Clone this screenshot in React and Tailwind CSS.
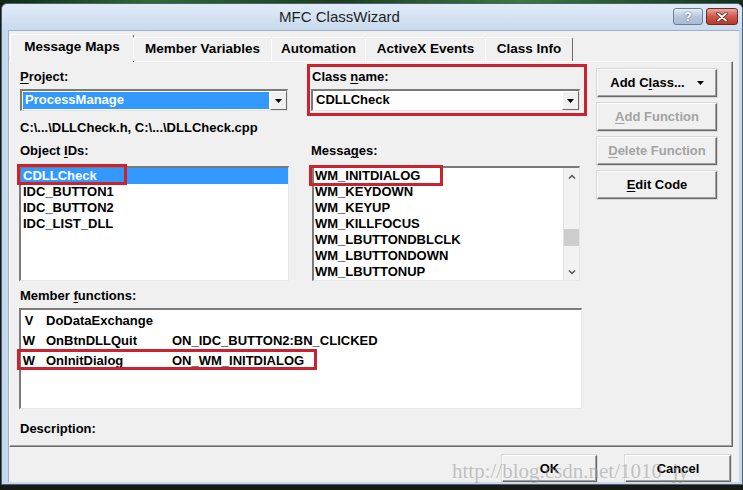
import React from "react";

const tabs = [
  { label: "Message Maps", w: "w-[124px]" },
  { label: "Member Variables", w: "w-[139px]" },
  { label: "Automation", w: "w-[95px]" },
  { label: "ActiveX Events", w: "w-[121px]" },
  { label: "Class Info", w: "w-[88px]" },
];

const objectIds = ["CDLLCheck", "IDC_BUTTON1", "IDC_BUTTON2", "IDC_LIST_DLL"];

const messages = [
  "WM_INITDIALOG",
  "WM_KEYDOWN",
  "WM_KEYUP",
  "WM_KILLFOCUS",
  "WM_LBUTTONDBLCLK",
  "WM_LBUTTONDOWN",
  "WM_LBUTTONUP",
];

const members = [
  { kind: "V", name: "DoDataExchange", handler: "" },
  { kind: "W", name: "OnBtnDLLQuit", handler: "ON_IDC_BUTTON2:BN_CLICKED" },
  { kind: "W", name: "OnInitDialog", handler: "ON_WM_INITDIALOG" },
];

const sunken =
  "border-t-2 border-l-2 border-r border-b border-t-[#7a7a7a] border-l-[#7a7a7a] border-r-[#e6e6e6] border-b-[#e6e6e6]";

const DropArrow = () => (
  <div className="w-[17px] h-full flex items-center justify-center bg-[#f0f0f0] border-t border-l border-white border-r border-b border-r-[#696969] border-b-[#696969]">
    <svg width="7" height="4" viewBox="0 0 7 4">
      <path d="M0 0h7L3.5 4z" fill="#000" />
    </svg>
  </div>
);

const Button = ({ children, disabled, className = "" }) => (
  <div
    className={
      "flex items-center justify-center bg-[#f0f0f0] border-t border-l border-white border-r border-b border-r-[#696969] border-b-[#696969] shadow-[inset_-1px_-1px_0_#a0a0a0,0_0_0_1px_#d8d8d8] text-[13px] font-bold " +
      (disabled ? "text-[#a3a3a3] " : "text-black ") +
      className
    }
  >
    {children}
  </div>
);

const Label = ({ children, className = "" }) => (
  <div className={"h-[16px] leading-[16px] text-[13px] font-bold text-black " + className}>{children}</div>
);

const RedBox = ({ className }) => (
  <div className={"absolute border-[3px] border-[#c9232f] pointer-events-none " + className} />
);

export default function App() {
  return (
    <div
      className="relative w-[743px] h-[490px] overflow-hidden bg-[#161a16] select-none"
      style={{ fontFamily: '"Liberation Sans", Arial, sans-serif' }}
    >
      <div className="h-[3px] bg-[linear-gradient(90deg,#0d2a12,#2f6b33_20%,#1c3d1e_45%,#3a7a3c_70%,#14301a)]" />

      {/* window */}
      <div className="flex flex-col h-[482px] rounded-t-[6px] border border-[#4d5f78] bg-[#c6d8ed] ml-[1px] w-[742px]">
        {/* title bar */}
        <div className="flex items-start h-[26px] rounded-t-[6px] bg-[linear-gradient(180deg,#e1ebf7,#c8daee)]">
          <div className="flex-1 text-center text-[15px] leading-[26px] text-[#1e1e1e] pl-[4px]">MFC ClassWizard</div>
          <div className="flex mt-[4px] mr-[4px] gap-[3px]">
            <div className="w-[30px] h-[17px] rounded-[3px] border border-[#6d7f97] bg-[linear-gradient(180deg,#e6eef8,#b7c8dd_50%,#a9bcd4)] flex items-center justify-center text-[12px] font-bold text-white [text-shadow:0_0_2px_#3d4f66]">
              ?
            </div>
            <div className="w-[32px] h-[17px] rounded-[3px] border border-[#6b2a25] bg-[linear-gradient(180deg,#e9a89e,#cf5a4b_50%,#b8392b)] flex items-center justify-center">
              <svg width="12" height="10" viewBox="0 0 12 10">
                <path d="M2 1.5L10 8.5M10 1.5L2 8.5" stroke="#5a1a14" strokeWidth="3.4" strokeLinecap="round" />
                <path d="M2 1.5L10 8.5M10 1.5L2 8.5" stroke="#ffffff" strokeWidth="2" strokeLinecap="round" />
              </svg>
            </div>
          </div>
        </div>

        {/* client area */}
        <div className="flex-1 ml-[6px] mr-[3px] mb-[4px] bg-[#f0f0f0] border-t border-l border-[#9db1cb] flex flex-col">
          {/* tabs */}
          <div className="flex items-end ml-[1px] mt-[2px] h-[28px] relative z-10">
            {tabs.map((t, i) => (
              <div
                key={t.label}
                className={
                  t.w +
                  " flex items-center justify-center rounded-t-[2px] text-[13.5px] font-bold text-black bg-[#f0f0f0] border-t border-l border-white border-r border-r-[#696969] " +
                  (i === 0 ? "h-[28px] pb-[2px] -mb-px" : "h-[24px] -ml-px")
                }
              >
                {t.label}
              </div>
            ))}
          </div>

          {/* tab panel */}
          <div className="w-[724px] h-[386px] border-t border-l border-white border-r border-b border-r-[#696969] border-b-[#696969] shadow-[inset_-1px_-1px_0_#a0a0a0] flex pl-[9px]">
            <div className="w-[570px] flex flex-col">
              <div className="flex">
                {/* project column */}
                <div className="w-[270px] flex flex-col">
                  <Label className="mt-[7px] pl-[1px]">
                    <span className="underline underline-offset-2">P</span>roject:
                  </Label>
                  <div className={"mt-[4px] h-[22px] w-[268px] ml-[1px] flex bg-white " + sunken}>
                    <div className="flex-1 m-[1px] bg-[#3399ff] text-white text-[13px] font-bold leading-[16px] pl-[2px]">
                      ProcessManage
                    </div>
                    <DropArrow />
                  </div>
                  <Label className="mt-[9px] pl-[1px]">C:\...\DLLCheck.h, C:\...\DLLCheck.cpp</Label>
                  <Label className="mt-[7px] pl-[1px]">
                    Object <span className="underline underline-offset-2">I</span>Ds:
                  </Label>
                  <div className={"relative mt-[7px] h-[115px] w-[270px] bg-white " + sunken}>
                    {objectIds.map((o, i) => (
                      <div
                        key={o}
                        className={
                          "h-[16px] leading-[16px] text-[13px] font-bold pl-[2px] " +
                          (i === 0 ? "bg-[#3399ff] text-white" : "text-black")
                        }
                      >
                        {o}
                      </div>
                    ))}
                    <RedBox className="left-[-4px] top-[-4px] w-[110px] h-[21px]" />
                  </div>
                </div>

                {/* class column */}
                <div className="ml-[18px] w-[280px] flex flex-col">
                  <div className="mt-[2px] border-[3px] border-[#c9232f] pt-[2px] pb-[2px] pl-[1px]">
                    <Label className="pl-[1px]">
                      Class <span className="underline underline-offset-2">n</span>ame:
                    </Label>
                    <div className={"mt-[4px] h-[22px] w-[269px] flex bg-white " + sunken}>
                      <div className="flex-1 text-black text-[13px] font-bold leading-[18px] pl-[3px]">CDLLCheck</div>
                      <DropArrow />
                    </div>
                  </div>
                  <Label className="mt-[27px] ml-[4px]">
                    Messa<span className="underline underline-offset-2">g</span>es:
                  </Label>
                  <div className={"relative mt-[7px] ml-[5px] h-[115px] w-[268px] bg-white flex " + sunken}>
                    <div className="flex-1 pl-[1px]">
                      {messages.map((m) => (
                        <div key={m} className="h-[16px] leading-[16px] text-[13px] font-bold text-black">
                          {m}
                        </div>
                      ))}
                    </div>
                    <div className="w-[16px] bg-[#f2f2f2] border-l border-[#e2e2e2] flex flex-col items-center">
                      <div className="h-[16px] flex items-center justify-center">
                        <svg width="8" height="5" viewBox="0 0 8 5">
                          <path d="M1 4.5L4 1.5L7 4.5" stroke="#555" strokeWidth="1.5" fill="none" />
                        </svg>
                      </div>
                      <div className="mt-[45px] h-[17px] w-[15px] bg-[#cdcdcd]" />
                      <div className="flex-1" />
                      <div className="h-[16px] flex items-center justify-center">
                        <svg width="8" height="5" viewBox="0 0 8 5">
                          <path d="M1 0.5L4 3.5L7 0.5" stroke="#555" strokeWidth="1.5" fill="none" />
                        </svg>
                      </div>
                    </div>
                    <RedBox className="left-[-5px] top-[-3px] w-[134px] h-[21px]" />
                  </div>
                </div>
              </div>

              <Label className="mt-[7px] pl-[1px]">
                Member <span className="underline underline-offset-2">f</span>unctions:
              </Label>
              <div className={"relative mt-[4px] h-[101px] w-[563px] bg-white pt-[1px] " + sunken}>
                {members.map((m) => (
                  <div key={m.name} className="h-[20px] flex items-center text-[13px] font-bold text-black">
                    <div className="w-[16px] text-center">{m.kind}</div>
                    <div className="ml-[9px] w-[126px]">{m.name}</div>
                    <div>{m.handler}</div>
                  </div>
                ))}
                <RedBox className="left-[-4px] top-[39px] w-[300px] h-[21px]" />
              </div>
              <Label className="mt-[12px] pl-[1px]">Description:</Label>
            </div>

            {/* buttons */}
            <div className="ml-[8px] mt-[7px] flex flex-col gap-[6px]">
              <Button className="w-[120px] h-[28px] gap-[12px]">
                <span>
                  Add C<span className="underline underline-offset-2">l</span>ass...
                </span>
                <svg width="7" height="4" viewBox="0 0 7 4">
                  <path d="M0 0h7L3.5 4z" fill="#000" />
                </svg>
              </Button>
              <Button disabled className="w-[120px] h-[28px]">
                <span>
                  <span className="underline underline-offset-2">A</span>dd Function
                </span>
              </Button>
              <Button disabled className="w-[120px] h-[28px]">
                <span>
                  <span className="underline underline-offset-2">D</span>elete Function
                </span>
              </Button>
              <Button className="w-[120px] h-[28px]">
                <span>
                  <span className="underline underline-offset-2">E</span>dit Code
                </span>
              </Button>
            </div>
          </div>

          {/* dialog buttons */}
          <div className="flex justify-end mt-[8px] mr-[8px] gap-[28px]">
            <Button className="w-[95px] h-[27px]">OK</Button>
            <Button className="w-[106px] h-[27px]">Cancel</Button>
          </div>
        </div>
      </div>

      {/* watermark */}
      <div
        className="absolute left-[452px] top-[456px] text-[21px] text-[rgba(150,150,150,0.55)] pointer-events-none whitespace-nowrap"
        style={{ fontFamily: '"Liberation Serif", serif' }}
      >
        http://blog.csdn.net/1010_jy
      </div>
    </div>
  );
}
